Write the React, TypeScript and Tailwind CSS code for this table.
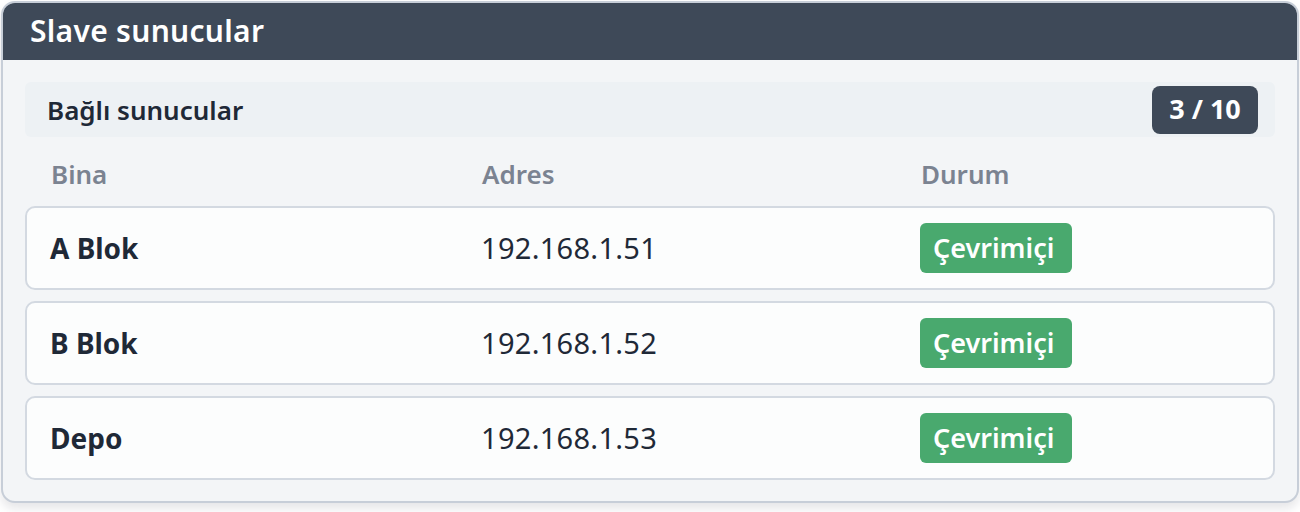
import React from "react";

const servers = [
  { name: "A Blok", ip: "192.168.1.51" },
  { name: "B Blok", ip: "192.168.1.52" },
  { name: "Depo", ip: "192.168.1.53" },
];

export default function App() {
  return (
    <div
      className="w-[1300px] h-[512px] bg-white pt-px pl-px"
      style={{ fontFamily: '"Noto Sans", "Open Sans", sans-serif' }}
    >
      <div className="w-[1298px] border-2 border-[#c7ced8] rounded-[14px] overflow-hidden bg-[#f3f5f7] shadow-[0_6px_10px_rgba(15,23,42,0.10)]">
        {/* Header */}
        <div className="h-[57px] bg-[#3e4958] flex items-center px-[27px] pb-[1px]">
          <h2 className="text-[30px] font-semibold text-white leading-none tracking-[0.01em]">
            Slave sunucular
          </h2>
        </div>

        {/* Body */}
        <div className="px-[22px] pt-[22px] pb-[21px]">
          <div className="h-[55px] bg-[#edf1f4] rounded-md flex items-center justify-between pl-[22px] pr-[17px]">
            <span className="text-[26px] font-semibold text-[#1f2937] leading-none">Bağlı sunucular</span>
            <span className="h-[48px] w-[106px] rounded-lg bg-[#3e4958] text-white text-[27px] font-bold flex items-center justify-center">
              3 / 10
            </span>
          </div>

          <div className="h-[69px] grid grid-cols-[431px_439px_1fr] items-center pl-[26px] pt-[5px] text-[26px] font-semibold text-[#7b8391]">
            <span>Bina</span>
            <span>Adres</span>
            <span>Durum</span>
          </div>

          <div className="flex flex-col gap-[11px]">
            {servers.map((s) => (
              <div
                key={s.ip}
                className="h-[84px] border-2 border-[#d3d9e1] rounded-[10px] bg-[#fcfdfd] grid grid-cols-[431px_439px_1fr] items-center pl-[23px]"
              >
                <span className="text-[28px] font-bold text-[#1f2937]">{s.name}</span>
                <span className="text-[29px] text-[#1f2937] tracking-[0.01em]">{s.ip}</span>
                <span>
                  <span className="inline-flex items-center h-[50px] w-[152px] pl-[13px] rounded-md bg-[#49a96e] text-white text-[27px] font-semibold">
                    Çevrimiçi
                  </span>
                </span>
              </div>
            ))}
          </div>
        </div>
      </div>
    </div>
  );
}
